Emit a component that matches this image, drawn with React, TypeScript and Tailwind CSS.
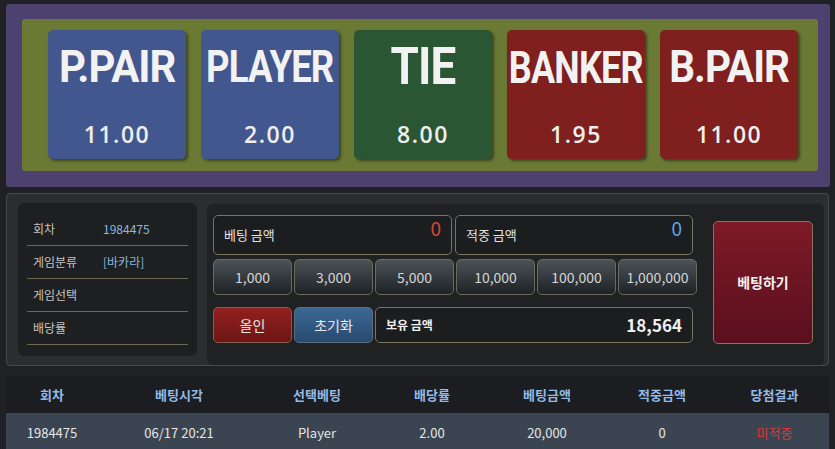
import React from "react";

const KR = '"Noto Sans CJK KR", "Noto Sans", sans-serif';

const cards = [
  { t: "P.PAIR", v: "11.00", bg: "bg-[#43578f]", tc: "text-[44px] scale-x-[0.95]" },
  { t: "PLAYER", v: "2.00", bg: "bg-[#43578f]", tc: "text-[44px] scale-x-[0.83]" },
  { t: "TIE", v: "8.00", bg: "bg-[#2a5634]", tc: "text-[52px] scale-x-[0.88]" },
  { t: "BANKER", v: "1.95", bg: "bg-[#7f1f1e]", tc: "text-[45px] scale-x-[0.8]" },
  { t: "B.PAIR", v: "11.00", bg: "bg-[#7f1f1e]", tc: "text-[44px] scale-x-[0.92]" },
];

const chips = ["1,000", "3,000", "5,000", "10,000", "100,000", "1,000,000"];

const info = [
  { l: "회차", v: "1984475" },
  { l: "게임분류", v: "[바카라]" },
  { l: "게임선택", v: "" },
  { l: "배당률", v: "" },
];

const headers = ["회차", "베팅시각", "선택베팅", "배당률", "베팅금액", "적중금액", "당첨결과"];
const row = ["1984475", "06/17 20:21", "Player", "2.00", "20,000", "0", "미적중"];

export default function App() {
  return (
    <div
      className="w-[835px] h-[449px] overflow-hidden bg-[#202124] pt-[4px]"
      style={{ fontFamily: KR }}
    >
      {/* top odds panel */}
      <div className="ml-[6px] w-[824px] h-[183px] rounded-[3px] bg-[#4d4170] pl-[16px] pr-[12px] pt-[15px]">
        <div className="h-[152px] rounded-[3px] bg-[#6a7a35] pl-[26px] pt-[11px] flex gap-[15px]">
          {cards.map((c) => (
            <div
              key={c.t}
              className={`w-[138px] h-[129px] rounded-[5px] ${c.bg} shadow-[2px_2px_3px_rgba(0,0,0,0.45)] flex flex-col items-center`}
            >
              <div className="h-[74px] flex items-center justify-center w-full">
                <span
                  className={`${c.tc} font-bold text-[#f2f2f2] leading-none inline-block tracking-[-1px]`}
                  style={{ fontFamily: "Roboto, sans-serif" }}
                >
                  {c.t}
                </span>
              </div>
              <div
                className="mt-[19px] text-[23px] font-semibold text-[#eeeeee] tracking-[1.5px] leading-none"
                style={{ fontFamily: '"Open Sans", sans-serif' }}
              >
                {c.v}
              </div>
            </div>
          ))}
        </div>
      </div>

      {/* betting panel */}
      <div className="ml-[6px] mt-[6px] w-[823px] h-[173px] rounded-[4px] bg-[#2b2e30] border border-[#4a4a44] flex pl-[11px] pt-[9px]">
        <div className="w-[179px] h-[153px] rounded-[6px] bg-[#1e1f21] px-[9px] pt-[10px]">
          {info.map((r) => (
            <div
              key={r.l}
              className="h-[33px] border-b border-[#6b6852] flex items-center pl-[6px] text-[12px]"
            >
              <span className="w-[70px] text-[#c4c4c4]">{r.l}</span>
              <span className="text-[#8cb8dc]">{r.v}</span>
            </div>
          ))}
        </div>

        <div className="ml-[10px] mt-[1px] w-[617px] h-[161px] rounded-[6px] bg-[#1f2123] flex pl-[6px] pt-[11px]">
          <div className="w-[484px] flex flex-col">
            <div className="flex gap-[3px] h-[40px]">
              <div className="w-[239px] h-full rounded-[5px] border border-[#7a7463] bg-[#1c1d1f] flex items-center justify-between px-[10px]">
                <span className="text-[13px] text-[#e2e2e2]">베팅 금액</span>
                <span className="text-[19px] text-[#d9453c] -mt-[14px]">0</span>
              </div>
              <div className="w-[238px] h-full rounded-[5px] border border-[#7a7463] bg-[#1c1d1f] flex items-center justify-between px-[10px]">
                <span className="text-[13px] text-[#e2e2e2]">적중 금액</span>
                <span className="text-[19px] text-[#5da3e4] -mt-[14px]">0</span>
              </div>
            </div>
            <div className="flex gap-[2px] mt-[4px] h-[36px]">
              {chips.map((c) => (
                <div
                  key={c}
                  className="w-[79px] h-full rounded-[5px] border border-[#6c695d] bg-gradient-to-b from-[#4b5258] to-[#1f2326] flex items-center justify-center text-[14px] text-[#d6d6d6]"
                >
                  {c}
                </div>
              ))}
            </div>
            <div className="flex gap-[2px] mt-[12px] h-[36px]">
              <div className="w-[79px] h-full rounded-[5px] border border-[#8a5a4a] bg-gradient-to-b from-[#941f1f] to-[#6d1616] flex items-center justify-center text-[14px] text-[#e8e8e8]">
                올인
              </div>
              <div className="w-[79px] h-full rounded-[5px] border border-[#5a6e80] bg-gradient-to-b from-[#3d6894] to-[#274a70] flex items-center justify-center text-[14px] text-[#e8e8e8]">
                초기화
              </div>
              <div className="w-[318px] h-full rounded-[5px] border border-[#7a7463] bg-[#1c1d1f] flex items-center justify-between px-[10px]">
                <span className="text-[12px] font-bold text-[#f0f0f0]">보유 금액</span>
                <span className="text-[17px] font-bold text-[#f0f0f0]">18,564</span>
              </div>
            </div>
          </div>
          <div className="ml-[16px] mt-[6px] w-[100px] h-[123px] rounded-[5px] border border-[#8a7060] bg-gradient-to-b from-[#7e1a27] to-[#5a0f1e] flex items-center justify-center text-[14px] font-bold text-[#f2f2f2]">
            베팅하기
          </div>
        </div>
      </div>

      {/* table */}
      <div className="ml-[6px] mt-[10px] w-[823px]">
        <div className="h-[37px] bg-[#1c1d21] grid grid-cols-[92px_162px_114px_116px_114px_116px_1fr] items-center text-[13px] font-bold text-[#92bae6]">
          {headers.map((h) => (
            <div key={h} className="text-center">
              {h}
            </div>
          ))}
        </div>
        <div className="h-[40px] bg-[#3b4551] grid grid-cols-[92px_162px_114px_116px_114px_116px_1fr] items-center text-[13px] text-[#e6e6e6]">
          {row.map((c, i) => (
            <div key={i} className={`text-center ${i === 6 ? "text-[#d83a3a]" : ""}`}>
              {c}
            </div>
          ))}
        </div>
      </div>
    </div>
  );
}
